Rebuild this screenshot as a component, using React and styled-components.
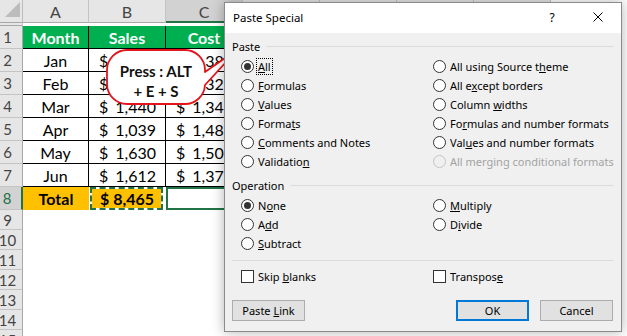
import React from "react";
import styled, { createGlobalStyle } from "styled-components";

const GlobalStyle = createGlobalStyle`
  html, body { margin: 0; padding: 0; background: #fff; overflow: hidden; }
  * { box-sizing: border-box; }
`;

const COLS = "23px 66px 77px 77px 77px 77px 77px 77px";
const UI_FONT = `"Noto Sans", "Open Sans", sans-serif`;
const GREEN = "#217346";

const Screen = styled.div`
  position: relative;
  width: 627px;
  height: 336px;
  overflow: hidden;
  background: #fff;
  font-family: Lato, "Liberation Sans", sans-serif;
`;

const Sheet = styled.div`
  display: flex;
  flex-direction: column;
`;

const SheetRow = styled.div`
  display: grid;
  grid-template-columns: ${COLS};
  height: ${(p) => p.$h}px;
`;

const Corner = styled.div`
  background: #e6e6e6;
  border-right: 1px solid #bdbdbd;
  border-bottom: 1px solid #a8a8a8;
  display: flex;
  align-items: flex-end;
  justify-content: flex-end;
  padding: 0 2px 5px 0;
`;

const ColHead = styled.div`
  background: ${(p) => (p.$active ? "#d2d2d2" : "#e6e6e6")};
  border-right: 1px solid #c4c4c4;
  border-bottom: ${(p) => (p.$active ? `2px solid ${GREEN}` : "1px solid #a8a8a8")};
  display: flex;
  align-items: center;
  justify-content: center;
  color: #444;
  font-size: 16px;
  padding-top: 1px;
`;

const RowHead = styled.div`
  background: ${(p) => (p.$active ? "#d2d2d2" : "#e6e6e6")};
  border-right: ${(p) => (p.$active ? `2px solid ${GREEN}` : "1px solid #a8a8a8")};
  border-bottom: 1px solid #c4c4c4;
  display: flex;
  align-items: center;
  justify-content: center;
  padding-right: 7px;
  color: ${(p) => (p.$active ? GREEN : "#444")};
  font-size: 15px;
`;

const Cell = styled.div`
  display: flex;
  align-items: center;
  justify-content: ${(p) => (p.$acct ? "space-between" : "center")};
  padding: ${(p) => (p.$acct ? "0 9px 0 10px" : "0")};
  background: ${(p) => p.$fill || "transparent"};
  color: ${(p) => p.$color || "#000"};
  font-weight: ${(p) => (p.$bold ? 700 : 400)};
  font-size: 16px;
  white-space: nowrap;
  overflow: hidden;
  border-right: 1px solid #000;
  border-bottom: 1px solid #000;
`;

const TotalCell = styled(Cell)`
  border: none;
`;

const CopiedCell = styled(Cell)`
  border: 2px dashed ${GREEN};
  background-clip: padding-box;
  padding: 0 7px 0 8px;
  margin: 0 3px 0 1px;
`;

const ActiveCell = styled.div`
  border: 2px solid ${GREEN};
  background: #fff;
`;

const Empty = styled.div``;

/* ---------- callout ---------- */
const Callout = styled.div`
  position: absolute;
  left: 100px;
  top: 40px;
  width: 140px;
  height: 70px;
`;

const CalloutShape = styled.svg`
  position: absolute;
  inset: 0;
`;

const CalloutText = styled.div`
  position: absolute;
  left: 7px;
  top: 10px;
  width: 98px;
  height: 54px;
  padding-top: 7px;
  display: flex;
  flex-direction: column;
  align-items: center;
  justify-content: center;
  font-weight: 700;
  font-size: 15px;
  line-height: 20px;
  color: #111;
`;

/* ---------- dialog ---------- */
const Dialog = styled.div`
  position: absolute;
  left: 224px;
  top: 2px;
  width: 398px;
  height: 330px;
  background: #f0f0f0;
  border: 1px solid #8a8a8a;
  box-shadow: 0 0 12px rgba(0, 0, 0, 0.3);
  font-family: ${UI_FONT};
  font-size: 11px;
  color: #000;
  display: flex;
  flex-direction: column;
`;

const TitleBar = styled.div`
  height: 30px;
  background: #fff;
  display: flex;
  align-items: center;
  padding-left: 8px;
`;

const Title = styled.div`
  flex: 1;
  font-size: 11.5px;
  padding-bottom: 2px;
`;

const TitleButton = styled.div`
  width: 46px;
  height: 30px;
  display: flex;
  align-items: center;
  justify-content: center;
  font-size: 12px;
  padding-bottom: 2px;
`;

const Body = styled.div`
  display: flex;
  flex-direction: column;
  padding: 0 7px;
`;

const GroupHeader = styled.div`
  display: flex;
  align-items: center;
  gap: 6px;
  height: 19px;
  margin-top: ${(p) => p.$mt}px;
  &::after {
    content: "";
    flex: 1;
    height: 1px;
    background: #dcdcdc;
  }
`;

const OptionGrid = styled.div`
  display: grid;
  grid-template-columns: 192px 1fr;
  grid-auto-rows: 19px;
  padding-left: 9px;
  margin-top: ${(p) => p.$mt}px;
`;

const Option = styled.div`
  display: flex;
  align-items: center;
  gap: 4px;
  white-space: nowrap;
  color: ${(p) => (p.$disabled ? "#a3a3a3" : "#000")};
  u {
    text-decoration: underline;
    text-underline-offset: 1px;
  }
`;

const RadioCircle = styled.span`
  width: 13px;
  height: 13px;
  border-radius: 50%;
  border: 1px solid ${(p) => (p.$disabled ? "#c4c4c4" : "#333")};
  background: ${(p) => (p.$disabled ? "#f0f0f0" : "#fff")};
  display: flex;
  align-items: center;
  justify-content: center;
  flex: none;
  &::after {
    content: "";
    width: 7px;
    height: 7px;
    border-radius: 50%;
    background: #333;
    display: ${(p) => (p.$checked ? "block" : "none")};
  }
`;

const CheckBox = styled.span`
  width: 13px;
  height: 13px;
  border: 1px solid #333;
  background: #fff;
  flex: none;
`;

const Focus = styled.span`
  outline: 1px dotted #000;
  outline-offset: 0;
  padding: 0 1px;
  margin-left: -1px;
`;

const Separator = styled.div`
  height: 1px;
  background: #dcdcdc;
  margin-top: 7px;
`;

const ButtonRow = styled.div`
  display: flex;
  align-items: center;
  gap: 11px;
  margin-top: 14px;
  padding-right: 1px;
`;

const Spacer = styled.div`
  flex: 1;
`;

const Button = styled.div`
  width: 73px;
  height: 21px;
  background: #e1e1e1;
  border: ${(p) => (p.$primary ? "2px solid #0078d7" : "1px solid #adadad")};
  display: flex;
  align-items: center;
  justify-content: center;
  padding-bottom: 1px;
  white-space: nowrap;
  u {
    text-decoration: underline;
    text-underline-offset: 1px;
  }
`;

const data = [
  ["Jan", "1,354", "1,385"],
  ["Feb", "1,390", "1,325"],
  ["Mar", "1,440", "1,345"],
  ["Apr", "1,039", "1,482"],
  ["May", "1,630", "1,502"],
  ["Jun", "1,612", "1,375"],
];

const pasteOptions = [
  { label: <Focus><u>A</u>ll</Focus>, checked: true },
  { label: <>All using Source t<u>h</u>eme</> },
  { label: <><u>F</u>ormulas</> },
  { label: <>All e<u>x</u>cept borders</> },
  { label: <><u>V</u>alues</> },
  { label: <>Column <u>w</u>idths</> },
  { label: <>Forma<u>t</u>s</> },
  { label: <>Fo<u>r</u>mulas and number formats</> },
  { label: <><u>C</u>omments and Notes</> },
  { label: <>Val<u>u</u>es and number formats</> },
  { label: <>Validatio<u>n</u></> },
  { label: <>All merging conditional formats</>, disabled: true },
];

const opOptions = [
  { label: <>N<u>o</u>ne</>, checked: true },
  { label: <><u>M</u>ultiply</> },
  { label: <>A<u>d</u>d</> },
  { label: <>D<u>i</u>vide</> },
  { label: <><u>S</u>ubtract</> },
];

function Radio({ label, checked, disabled }) {
  return (
    <Option $disabled={disabled}>
      <RadioCircle $checked={checked} $disabled={disabled} />
      <span>{label}</span>
    </Option>
  );
}

/* columns D..H lie under the dialog; only their grey header strip shows */
const hiddenCols = [4, 5, 6, 7, 8];

export default function App() {
  return (
    <Screen>
      <GlobalStyle />
      <Sheet>
        <SheetRow $h={26}>
          <Corner>
            <svg width="15" height="15" viewBox="0 0 15 15">
              <polygon points="15,0 15,15 0,15" fill="#bcbcbc" />
            </svg>
          </Corner>
          <ColHead>A</ColHead>
          <ColHead>B</ColHead>
          <ColHead $active>C</ColHead>
          {hiddenCols.map((c) => (
            <ColHead key={c} />
          ))}
        </SheetRow>
        <SheetRow $h={23}>
          <RowHead>1</RowHead>
          <Cell $fill="#00b050" $color="#fff" $bold>Month</Cell>
          <Cell $fill="#00b050" $color="#fff" $bold>Sales</Cell>
          <Cell $fill="#00b050" $color="#fff" $bold>Cost</Cell>
        </SheetRow>
        {data.map(([m, s, c], i) => (
          <SheetRow $h={23} key={m}>
            <RowHead>{i + 2}</RowHead>
            <Cell>{m}</Cell>
            <Cell $acct>
              <span>$</span>
              <span>{s}</span>
            </Cell>
            <Cell $acct>
              <span>$</span>
              <span>{c}</span>
            </Cell>
          </SheetRow>
        ))}
        <SheetRow $h={23}>
          <RowHead $active>8</RowHead>
          <TotalCell $fill="#ffc000" $bold>Total</TotalCell>
          <CopiedCell $fill="#ffc000" $bold $acct>
            <span>$</span>
            <span>8,465</span>
          </CopiedCell>
          <ActiveCell />
        </SheetRow>
        {[9, 10, 11, 12, 13, 14, 15].map((n) => (
          <SheetRow $h={20} key={n}>
            <RowHead>{n}</RowHead>
            <Empty />
          </SheetRow>
        ))}
      </Sheet>

      <Callout>
        <CalloutShape width="140" height="70" viewBox="0 0 140 70">
          <path
            d="M 27 10 H 85 A 20 20 0 0 1 105 30 L 105 32 L 138 9 L 105 45 A 20 20 0 0 1 85 64 H 27 A 20 20 0 0 1 7 44 V 30 A 20 20 0 0 1 27 10 Z"
            fill="#fff"
            stroke="#e3141b"
            strokeWidth="1.8"
            strokeLinejoin="round"
          />
        </CalloutShape>
        <CalloutText>
          <span>Press : ALT</span>
          <span>+ E + S</span>
        </CalloutText>
      </Callout>

      <Dialog>
        <TitleBar>
          <Title>Paste Special</Title>
          <TitleButton>?</TitleButton>
          <TitleButton>
            <svg width="10" height="10" viewBox="0 0 10 10">
              <path d="M0.5 0.5 L9.5 9.5 M9.5 0.5 L0.5 9.5" stroke="#000" strokeWidth="1" />
            </svg>
          </TitleButton>
        </TitleBar>
        <Body>
          <GroupHeader $mt={4}>Paste</GroupHeader>
          <OptionGrid $mt={1}>
            {pasteOptions.map((o, i) => (
              <Radio key={i} {...o} />
            ))}
          </OptionGrid>
          <GroupHeader $mt={5}>Operation</GroupHeader>
          <OptionGrid $mt={1}>
            {opOptions.map((o, i) => (
              <Radio key={i} {...o} />
            ))}
          </OptionGrid>
          <Separator />
          <OptionGrid $mt={6}>
            <Option>
              <CheckBox />
              <span>Skip <u>b</u>lanks</span>
            </Option>
            <Option>
              <CheckBox />
              <span>Transpos<u>e</u></span>
            </Option>
          </OptionGrid>
          <ButtonRow>
            <Button>
              <span>Paste <u>L</u>ink</span>
            </Button>
            <Spacer />
            <Button $primary>OK</Button>
            <Button>Cancel</Button>
          </ButtonRow>
        </Body>
      </Dialog>
    </Screen>
  );
}
